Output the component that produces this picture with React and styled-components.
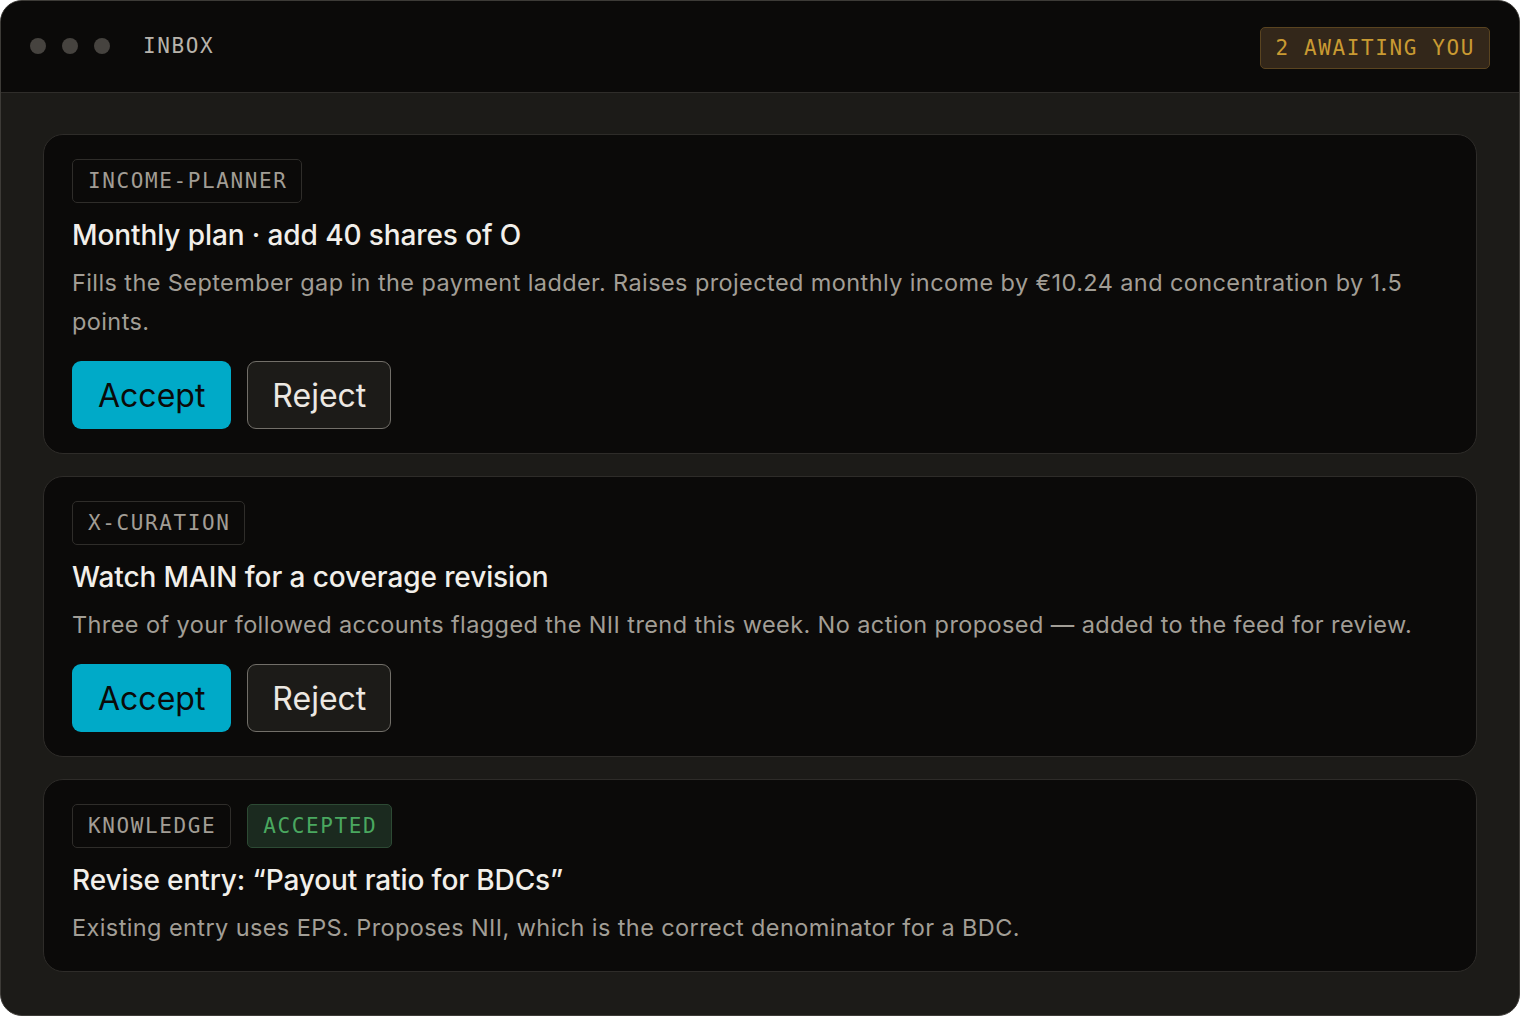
import styled, { createGlobalStyle } from "styled-components";

const Global = createGlobalStyle`
  html, body {
    margin: 0;
    padding: 0;
    background: #ffffff;
  }
  * {
    box-sizing: border-box;
  }
`;

const mono = `"DejaVu Sans Mono", "Liberation Mono", monospace`;
const sans = `Inter, "Noto Sans", "Liberation Sans", sans-serif`;

const Window = styled.div`
  width: 1520px;
  height: 1016px;
  border: 1.5px solid #3d3b37;
  border-radius: 22px;
  overflow: hidden;
  background: #1c1b18;
  display: flex;
  flex-direction: column;
  font-family: ${sans};
`;

const TopBar = styled.header`
  height: 92px;
  flex: 0 0 auto;
  background: #0b0a09;
  border-bottom: 1px solid #2f2d2a;
  display: flex;
  align-items: center;
  justify-content: space-between;
  padding: 0 29px 0 29px;
`;

const Left = styled.div`
  display: flex;
  align-items: center;
  margin-top: -2px;
`;

const Dots = styled.div`
  display: flex;
  gap: 16px;
  margin-right: 33px;
`;

const Dot = styled.span`
  width: 16px;
  height: 16px;
  border-radius: 50%;
  background: #46433f;
`;

const Title = styled.div`
  font-family: ${mono};
  font-size: 21px;
  letter-spacing: 1.6px;
  color: #b8b3ab;
`;

const Pill = styled.span`
  display: inline-flex;
  align-items: center;
  font-family: ${mono};
  font-size: 21px;
  line-height: 22px;
  letter-spacing: 1.6px;
  padding: 10px 14px 10px 15px;
  border-radius: 5px;
  border: 1px solid ${(p) => p.$border};
  background: ${(p) => p.$bg};
  color: ${(p) => p.$color};
`;

const Badge = styled(Pill)`
  margin-top: 3px;
  padding-top: 9px;
  padding-bottom: 9px;
`;

const tones = {
  plain: { $bg: "#0b0a09", $border: "#2f2d2a", $color: "#a29d95" },
  gold: { $bg: "#33271a", $border: "#5a4420", $color: "#c99a32" },
  green: { $bg: "#1b2a1f", $border: "#2d4a34", $color: "#4aa860" },
};

const Body = styled.main`
  flex: 1;
  padding: 41px 42px 0 42px;
  display: flex;
  flex-direction: column;
  gap: 22px;
`;

const Card = styled.section`
  background: #0b0a09;
  border: 1px solid #2e2c29;
  border-radius: 20px;
  padding: 24px 28px;
`;

const Tags = styled.div`
  display: flex;
  gap: 16px;
  margin-bottom: 14px;
`;

const Heading = styled.h2`
  margin: 0 0 10px;
  font-size: 28px;
  line-height: 36px;
  font-weight: 500;
  letter-spacing: -0.1px;
  color: #f2efea;
`;

const Desc = styled.p`
  margin: 0;
  font-size: 23.5px;
  line-height: 39px;
  letter-spacing: 0.4px;
  color: #a29e96;
`;

const Actions = styled.div`
  display: flex;
  gap: 16px;
  margin-top: 20px;
`;

const Button = styled.button`
  height: 68px;
  padding: 0 ${(p) => (p.$primary ? "26px" : "24px")};
  border-radius: 9px;
  font-family: ${sans};
  font-size: 32px;
  font-weight: 400;
  cursor: pointer;
  border: ${(p) => (p.$primary ? "none" : "1.5px solid #726f69")};
  background: ${(p) => (p.$primary ? "#00aac8" : "#1c1b18")};
  color: ${(p) => (p.$primary ? "#0b0a09" : "#ece8e2")};
`;

const items = [
  {
    tags: [["INCOME-PLANNER", "plain"]],
    title: "Monthly plan · add 40 shares of O",
    desc: "Fills the September gap in the payment ladder. Raises projected monthly income by €10.24 and concentration by 1.5 points.",
    actions: true,
  },
  {
    tags: [["X-CURATION", "plain"]],
    title: "Watch MAIN for a coverage revision",
    desc: "Three of your followed accounts flagged the NII trend this week. No action proposed — added to the feed for review.",
    actions: true,
  },
  {
    tags: [
      ["KNOWLEDGE", "plain"],
      ["ACCEPTED", "green"],
    ],
    title: "Revise entry: “Payout ratio for BDCs”",
    desc: "Existing entry uses EPS. Proposes NII, which is the correct denominator for a BDC.",
    actions: false,
  },
];

export default function App() {
  return (
    <>
      <Global />
      <Window>
        <TopBar>
          <Left>
            <Dots>
              <Dot />
              <Dot />
              <Dot />
            </Dots>
            <Title>INBOX</Title>
          </Left>
          <Badge {...tones.gold}>2 AWAITING YOU</Badge>
        </TopBar>
        <Body>
          {items.map((it) => (
            <Card key={it.title}>
              <Tags>
                {it.tags.map(([label, tone]) => (
                  <Pill key={label} {...tones[tone]}>
                    {label}
                  </Pill>
                ))}
              </Tags>
              <Heading>{it.title}</Heading>
              <Desc>{it.desc}</Desc>
              {it.actions && (
                <Actions>
                  <Button $primary>Accept</Button>
                  <Button>Reject</Button>
                </Actions>
              )}
            </Card>
          ))}
        </Body>
      </Window>
    </>
  );
}
